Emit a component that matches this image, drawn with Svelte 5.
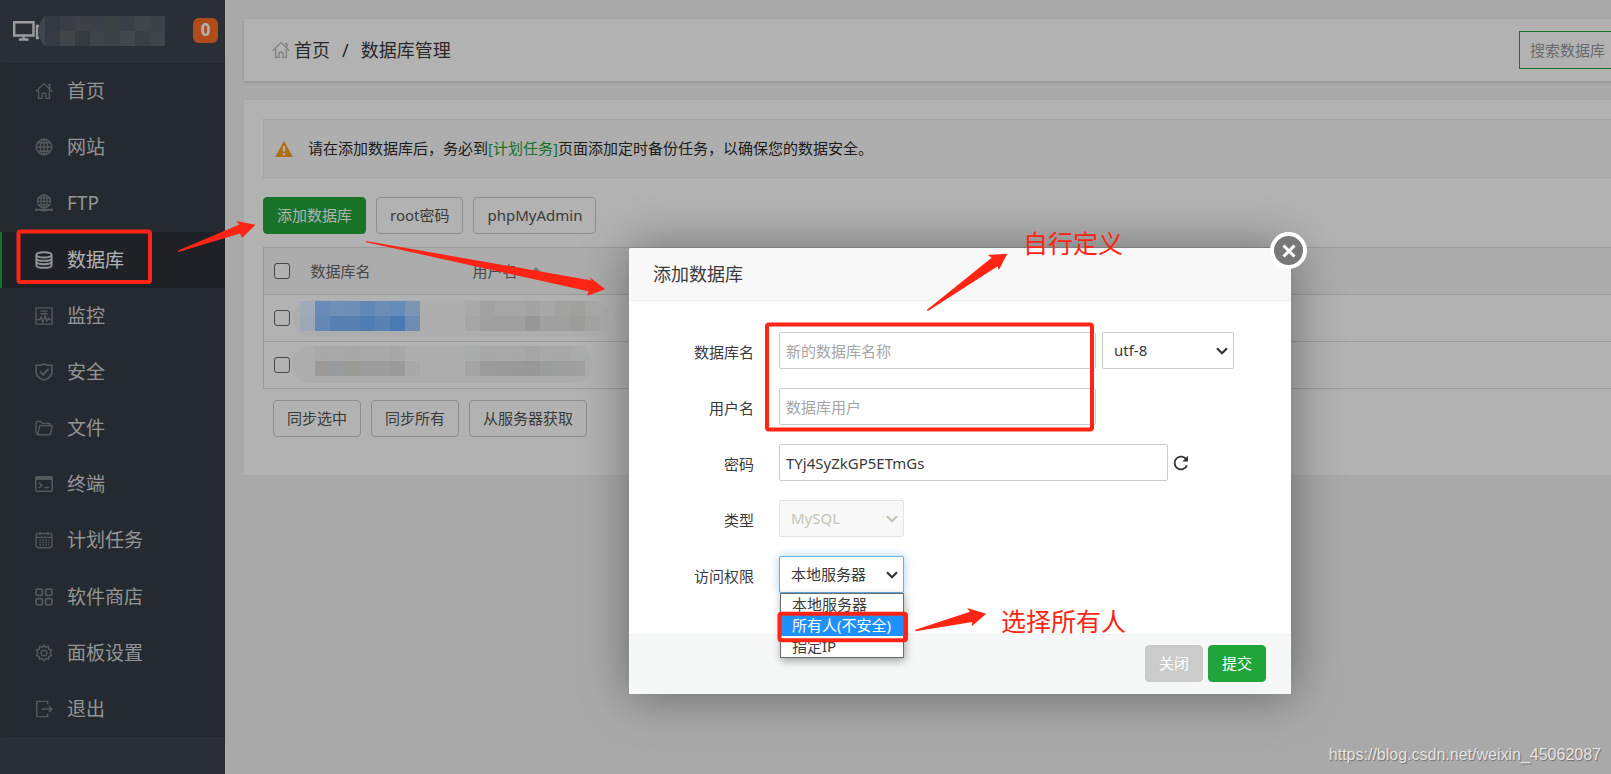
<script>
  const menu = [
    { label: '首页', icon: 'home' },
    { label: '网站', icon: 'globe' },
    { label: 'FTP', icon: 'ftp' },
    { label: '数据库', icon: 'database', active: true },
    { label: '监控', icon: 'monitor' },
    { label: '安全', icon: 'shield' },
    { label: '文件', icon: 'folder' },
    { label: '终端', icon: 'terminal' },
    { label: '计划任务', icon: 'calendar' },
    { label: '软件商店', icon: 'apps' },
    { label: '面板设置', icon: 'gear' },
    { label: '退出', icon: 'exit' }
  ];

  const access = ['本地服务器', '所有人(不安全)', '指定IP'];
  let picked = $state(1);

  // Each mosaic is rows of 15px cells.
  const mosaics = [
    {
      x: 45, y: 16,
      rows: [
        ['#353a42', '#393e45', '#3d4146', '#3d4147', '#3d4245', '#3a3f46', '#40454a', '#3c4246'],
        ['#363b43', '#414548', '#373b3e', '#3f4449', '#3d4246', '#43474b', '#3a3f44', '#40454a']
      ]
    },
    {
      x: 300, y: 301,
      rows: [
        ['#9fabb8', '#698ab8', '#7090b8', '#6d8eb6', '#6288b6', '#6b8db6', '#658bb8', '#7b95b4'],
        ['#9ca8b6', '#6388b5', '#567fb2', '#5680b1', '#4f7db3', '#5982b4', '#4a7ab4', '#6e8cb3']
      ]
    },
    {
      x: 465, y: 301,
      rows: [
        ['#a9a9a9', '#a1a1a1', '#a6a6a6', '#a6a6a6', '#a3a3a3', '#a8a8a8', '#a2a2a1', '#a0a09f', '#a6a6a6'],
        ['#a5a5a5', '#a0a0a0', '#9f9f9f', '#a0a0a0', '#979797', '#a0a0a0', '#9f9f9f', '#9c9c9a', '#a0a2a1']
      ]
    },
    {
      x: 315, y: 346,
      rows: [
        ['#a8a8a8', '#a9a9a9', '#a7a7a7', '#a9a9a9', '#a9a9a9', '#a7a7a7', '#adadad'],
        ['#9b9a98', '#9a9b9d', '#9a9a97', '#9d9d9d', '#9c9d9c', '#9b9a98', '#a8a8a8']
      ]
    },
    {
      x: 465, y: 346,
      rows: [
        ['#abacac', '#a7a8a7', '#a9a9a9', '#a8a8a8', '#a5a5a5', '#a9a9a9', '#a8a8a8', '#a9aaaa'],
        ['#a4a4a4', '#9b9b9b', '#9a9a9a', '#999999', '#989898', '#9c9e9d', '#9e9e9e', '#9f9f9f']
      ]
    }
  ];
</script>

{#snippet icon(name)}
  <svg class="ico" viewBox="0 0 20 20" aria-hidden="true">
    {#if name === 'home'}
      <path d="M1 10.500 10 1.800l9 8.700M14.200 3h2.300v4.500M4 9v9.200h3.800v-4.700q0-1 1-1h2.400q1 0 1 1v4.700H16V9" />
    {:else if name === 'globe'}
      <circle cx="10" cy="10" r="8.700" /><ellipse cx="10" cy="10" rx="4.200" ry="8.700" /><path d="M10 1.300v17.400M1.300 10h17.400M3 5.300h14M3 14.700h14" />
    {:else if name === 'ftp'}
      <circle cx="10" cy="8.200" r="7.200" /><ellipse cx="10" cy="8.200" rx="3.500" ry="7.200" /><path d="M10 1v15M2.800 8.200h14.400M4 4.500h12M4 12h12" /><path stroke-width="2" d="M0 17.500h20M7 18.500h6" />
    {:else if name === 'database'}
      <path stroke-width="2.200" d="M1.500 4.300C1.500 .4 18.500 .4 18.500 4.300S1.500 8.200 1.500 4.300v11.400c0 3.900 17 3.900 17 0V4.300M1.500 8c0 3.900 17 3.900 17 0M1.500 11.800c0 3.900 17 3.900 17 0" />
    {:else if name === 'monitor'}
      <path d="M1 1h18v18H1zM6 4.500h8M6 7.500h8M1 14h4l1.700-2.500L8.600 17l2.600-7 2 5.500 1.800-3 1 1.500h3" />
    {:else if name === 'shield'}
      <path stroke-width="1.800" d="M10 1c3 1.400 6 1.700 8.800 1.700v7.100c0 4.300-3.600 7.500-8.800 9.400-5.200-1.900-8.800-5.100-8.800-9.400V2.700C4 2.700 7 2.400 10 1z" /><path stroke-width="2" d="m5.500 9.500 3.500 3.500 6-6.500" />
    {:else if name === 'folder'}
      <path d="M3 17 1.200 15V4q0-1.200 1.200-1.200h4l2 2h7.200q1.200 0 1.200 1.200v1.200M3 17.500 5.200 8q.2-.8 1-.8h12.100q1 0 .8 1l-1.800 8.300q-.2 1-1.200 1H3z" />
    {:else if name === 'terminal'}
      <rect x=".8" y="2" width="18.400" height="16" rx="1" stroke-width="1.700" /><path stroke-width="3.600" d="M1 3.700h18" /><path stroke-width="1.700" d="m4.500 8.500 3.200 3-3.200 3M10.500 14h5" />
    {:else if name === 'calendar'}
      <rect x="1.200" y="2.800" width="17.600" height="15.800" rx="2" /><path d="M1.200 7h17.600M5.500.8v4M14.500.8v4" /><path stroke-dasharray="1.800 1.500" d="M4.800 10h11M4.800 12.800h11M4.800 15.600h11" />
    {:else if name === 'apps'}
      <g stroke-width="2"><rect x="1.200" y="1.200" width="7" height="7" rx="1.600" /><rect x="11.800" y="1.200" width="7" height="7" rx="1.600" /><rect x="1.200" y="11.800" width="7" height="7" rx="1.600" /><rect x="11.800" y="11.800" width="7" height="7" rx="1.600" /></g>
    {:else if name === 'gear'}
      <circle cx="10" cy="10" r="3.200" /><path stroke-width="1.600" d="m10 1.200 2 2.400 3-.9.400 3 2.900 1.200-1.400 2.900 1.400 2.900-2.900 1.300-.4 3-3-.8-2 2.600-2-2.600-3 .8-.4-3-2.900-1.300 1.400-2.900-1.400-2.900 2.900-1.200.4-3 3 .9z" />
    {:else if name === 'exit'}
      <path stroke-width="1.600" d="M14 5V1.500H2v17h12V15M7.500 10h11M15.500 6.800l3.300 3.200-3.300 3.200" />
    {/if}
  </svg>
{/snippet}

{#snippet chevron()}
  <svg class="chev" viewBox="0 0 12 8" aria-hidden="true"><path d="m1 1.300 5 5 5-5" /></svg>
{/snippet}

<div class="page">
  <aside>
    <header class="host">
      <svg class="screen" viewBox="0 0 26 20" aria-hidden="true">
        <path d="M1.200 1.200h19.300v13.300H1.200zM26 5h-2v12h2" /><path d="M6 18.500h9.500M10.700 15v3" />
      </svg>
      <span class="badge">0</span>
    </header>
    <nav>
      {#each menu as item}
        <a href="#{item.icon}" class:active={item.active}>
          {@render icon(item.icon)}
          <span>{item.label}</span>
        </a>
      {/each}
    </nav>
  </aside>

  <main>
    <div class="wide">
      <section class="crumbs">
        <div class="trail">
          {@render icon('home')}
          <a href="#home">首页</a><span class="sep">/</span><span>数据库管理</span>
        </div>
        <input type="search" placeholder="搜索数据库" aria-label="搜索数据库" />
      </section>

      <section class="content">
        <p class="notice">
          <svg viewBox="0 0 18 16" aria-hidden="true">
            <path fill="#f9a11b" d="M9 0l9 16H0z" /><path stroke="#fafafa" stroke-width="2.400" d="M9 5v5.500M9 12v2.200" />
          </svg>
          <span>请在添加数据库后，务必到<a href="#calendar">[计划任务]</a>页面添加定时备份任务，以确保您的数据安全。</span>
        </p>

        <div class="tools">
          <button class="btn green">添加数据库</button>
          <button class="btn">root密码</button>
          <button class="btn">phpMyAdmin</button>
        </div>

        <table>
          <thead>
            <tr>
              <th class="tick"><input type="checkbox" aria-label="全选" /></th>
              <th class="name">数据库名</th>
              <th>用户名<i class="sort"></i></th>
            </tr>
          </thead>
          <tbody>
            <tr><td class="tick"><input type="checkbox" aria-label="1" /></td><td></td><td></td></tr>
            <tr><td class="tick"><input type="checkbox" aria-label="2" /></td><td></td><td></td></tr>
          </tbody>
        </table>

        <div class="tools under">
          <button class="btn">同步选中</button>
          <button class="btn">同步所有</button>
          <button class="btn">从服务器获取</button>
        </div>
      </section>
    </div>
  </main>

  <div class="shade"></div>

  <form class="dialog" onsubmit={(e) => e.preventDefault()}>
    <h2>添加数据库</h2>
    <button type="button" class="close" aria-label="关闭窗口">
      <svg viewBox="0 0 14 14" aria-hidden="true"><path d="m1.500 1.500 11 11m0-11-11 11" /></svg>
    </button>

    <div class="fields">
      <div class="row">
        <label for="db-name">数据库名</label>
        <input id="db-name" class="mid" type="text" placeholder="新的数据库名称" />
        <span class="pick charset">
          <select aria-label="编码"><option>utf-8</option></select>
          {@render chevron()}
        </span>
      </div>
      <div class="row">
        <label for="db-user">用户名</label>
        <input id="db-user" class="mid" type="text" placeholder="数据库用户" />
      </div>
      <div class="row">
        <label for="db-pass">密码</label>
        <input id="db-pass" class="long" type="text" value="TYj4SyZkGP5ETmGs" />
        <button type="button" class="refresh" aria-label="随机密码">
          <svg viewBox="0 0 16 16" aria-hidden="true">
            <path fill="none" stroke="#333" stroke-width="1.800" d="M13.700 5A6.400 6.400 0 1 0 14 10.300" /><path fill="#333" d="M15 .8v5.700H9.300z" />
          </svg>
        </button>
      </div>
      <div class="row">
        <label for="db-type">类型</label>
        <span class="pick off">
          <select id="db-type" disabled><option>MySQL</option></select>
          {@render chevron()}
        </span>
      </div>
      <div class="row">
        <label for="db-access">访问权限</label>
        <span class="pick focus">
          <select id="db-access"><option>本地服务器</option></select>
          {@render chevron()}
          <ul role="listbox" aria-label="访问权限">
            {#each access as option, i}
              <li role="option" aria-selected={i === picked} class:on={i === picked}>{option}</li>
            {/each}
          </ul>
        </span>
      </div>
    </div>

    <footer>
      <button type="button" class="btn grey">关闭</button>
      <button type="submit" class="btn green">提交</button>
    </footer>
  </form>

  <svg class="marks" aria-hidden="true">
    <path fill="#40464a" d="M38 31q1-10 7-15v30q-5-4-7-15z" />
    <g fill="#000" fill-opacity=".025">
      <rect x="293" y="300" width="316" height="37" rx="18" />
      <rect x="292" y="346" width="300" height="37" rx="18" />
    </g>
    {#each mosaics as m}
      {#each m.rows as row, r}
        {#each row as fill, c}
          <rect x={m.x + c * 15} y={m.y + r * 15} width="15" height="15" {fill} shape-rendering="crispEdges" />
        {/each}
      {/each}
    {/each}
    <g fill="#ff2414">
      <path d="M178 250.500 239.500 224.500 236 221 255.500 224.700 242.300 237.700 240 233.500 178.500 252z" />
      <path d="M366 241 591.700 280.500 589 276.700 605.300 289.300 587.300 295.700 588.500 291.300 366.300 242.200z" />
      <path d="M926.700 310 991.700 257.700 987.700 255 1007.300 253.700 998.700 270.300 997.700 266.300 928 311z" />
      <path d="M915.300 629.800 970 611.700 967 608 986.300 613.700 971.700 626.300 972.300 622 915.500 631.200z" />
    </g>
    <g fill="none" stroke="#ff2414" stroke-width="4">
      <rect x="18.500" y="231.500" width="131.500" height="50.500" rx="2" />
      <rect x="767" y="324.500" width="325" height="105" rx="2" />
      <rect x="779.500" y="613.700" width="126.500" height="26.500" rx="2" />
    </g>
  </svg>
  <span class="note define">自行定义</span>
  <span class="note choose">选择所有人</span>
  <span class="source">https://blog.csdn.net/weixin_45062087</span>
</div>

<style>
  :global(body) {
    background: #f1f1f1;
  }
  .page {
    position: relative;
    display: flex;
    min-height: 100vh;
    overflow: hidden;
    color: #3a3a3a;
    font: 400 15px/21px 'Noto Sans', 'Noto Sans CJK SC', sans-serif;
  }
  .page *,
  .page {
    box-sizing: border-box;
  }
  a {
    color: inherit;
    text-decoration: none;
  }
  input,
  select,
  button {
    margin: 0;
    color: inherit;
    font: inherit;
  }

  /* sidebar */
  aside {
    display: flex;
    flex: none;
    flex-direction: column;
    width: 225px;
    padding-bottom: 37px;
    background: #3d444e;
  }
  .host {
    display: flex;
    align-items: center;
    justify-content: space-between;
    height: 63px;
    padding: 0 7px 2px 13px;
  }
  .screen {
    width: 26px;
    height: 20px;
    fill: none;
    stroke: #e0e2e3;
    stroke-width: 2.4;
  }
  .badge {
    width: 25px;
    height: 25px;
    border-radius: 6px;
    background: #fc6d26;
    color: #fff;
    font-size: 17px;
    font-weight: 700;
    line-height: 24px;
    text-align: center;
  }
  nav {
    display: flex;
    flex: 1;
    flex-direction: column;
  }
  nav a {
    display: flex;
    flex: 1;
    align-items: center;
    gap: 14px;
    padding-left: 33px;
    border-left: 2px solid #3a3d40;
    background: #353c45;
    color: #d4d4d4;
    font-size: 19px;
    line-height: 28px;
  }
  .ico {
    flex: none;
    width: 18px;
    height: 18px;
    fill: none;
    stroke: #7c7f82;
    stroke-width: 1.5;
  }
  nav a.active {
    border-left-color: #20a53a;
    background: #2c3138;
    color: #fff;
  }
  nav a.active .ico {
    stroke: #d0d2d4;
  }

  /* main area */
  main {
    flex: 1;
    min-width: 0;
    padding: 19px 0 0 19px;
    overflow: hidden;
    background: #f2f2f2;
  }
  .wide {
    width: calc(100% + 171px);
  }
  .crumbs {
    display: flex;
    align-items: center;
    justify-content: space-between;
    height: 62px;
    padding: 0 20px 0 28px;
    background: #fff;
    box-shadow: 0 1px 3px rgba(0, 0, 0, 0.15);
  }
  .trail {
    display: flex;
    align-items: center;
    gap: 4px;
    font-size: 18px;
    line-height: 26px;
  }
  .trail .ico {
    stroke: #bbb;
  }
  .sep {
    padding: 0 8px;
  }
  .crumbs input {
    width: 243px;
    height: 38px;
    padding: 0 10px;
    border: 1px solid #20a53a;
    border-radius: 0;
    background: transparent;
    appearance: none;
  }
  .crumbs input::placeholder {
    color: #999;
  }
  .content {
    margin-top: 19px;
    padding: 19px 19px 38px;
    background: #fff;
  }
  .notice {
    display: flex;
    align-items: center;
    gap: 15px;
    height: 59px;
    margin: 0;
    padding-left: 11px;
    border: 1px solid #ececec;
    background: #fafafa;
    color: #2a2a2a;
  }
  .notice svg {
    width: 18px;
    height: 16px;
  }
  .notice a {
    color: #20a53a;
  }
  .tools {
    display: flex;
    gap: 10px;
    margin-top: 19px;
  }
  .btn {
    height: 37px;
    padding: 0 13px;
    border: 1px solid #ccc;
    border-radius: 4px;
    background: #fff;
    color: #555;
    white-space: nowrap;
  }
  .btn.green {
    border-color: #20a53a;
    background: #20a53a;
    color: #fff;
  }
  .btn.grey {
    border-color: #cbcbcb;
    background: #cbcbcb;
    color: #fff;
  }
  table {
    width: 100%;
    margin-top: 13px;
    border: 1px solid #ddd;
    border-collapse: collapse;
    table-layout: fixed;
  }
  tr {
    height: 47px;
    border-top: 1px solid #ddd;
  }
  th,
  td {
    padding: 0;
    text-align: left;
    font-weight: 400;
    color: #666;
  }
  thead {
    background: #f6f6f6;
  }
  .tick {
    width: 47px;
    padding-left: 10px;
  }
  .name {
    width: 162px;
  }
  table input {
    display: block;
    width: 16px;
    height: 16px;
    border: 1px solid #666;
    border-radius: 3px;
    background: #fff;
    appearance: none;
  }
  .sort {
    display: inline-block;
    margin-left: 12px;
    border: 6px solid transparent;
    border-top: 0;
    border-bottom-color: #aaa;
    vertical-align: 4px;
  }
  .under {
    margin-top: 11px;
    padding-left: 10px;
  }

  .shade {
    position: absolute;
    inset: 0;
    background: rgba(0, 0, 0, 0.3);
  }

  /* dialog */
  .dialog {
    position: absolute;
    top: 248px;
    left: 629px;
    width: 662px;
    border-radius: 2px;
    background: #fff;
    box-shadow: 1px 1px 50px rgba(0, 0, 0, 0.4);
  }
  h2 {
    height: 53px;
    margin: 0;
    padding-left: 24px;
    border-bottom: 1px solid #eee;
    border-radius: 2px 2px 0 0;
    background: #f8f8f8;
    font-size: 18px;
    font-weight: 400;
    line-height: 53px;
  }
  .close {
    position: absolute;
    top: -16px;
    right: -16px;
    display: grid;
    place-items: center;
    width: 37px;
    height: 37px;
    padding: 0;
    border: 4px solid #fff;
    border-radius: 50%;
    background: #787878;
  }
  .close svg {
    width: 14px;
    height: 14px;
    stroke: #fff;
    stroke-width: 3;
  }
  .fields {
    display: flex;
    flex-direction: column;
    gap: 19px;
    padding: 31px 0 41px;
  }
  .row {
    display: flex;
    align-items: center;
    height: 37px;
  }
  label {
    width: 125px;
    margin-right: 25px;
    padding-top: 3px;
    text-align: right;
  }
  .row input {
    height: 37px;
    padding: 0 6px;
    border: 1px solid #ccc;
    border-radius: 2px;
    background: #fff;
  }
  .row input::placeholder {
    color: #a5a5a5;
  }
  .mid {
    width: 317px;
  }
  .long {
    width: 389px;
  }
  .refresh {
    display: flex;
    margin-left: 5px;
    padding: 0;
    border: 0;
    background: none;
  }
  .refresh svg {
    width: 16px;
    height: 16px;
  }
  .pick {
    position: relative;
    width: 125px;
    height: 37px;
  }
  .charset {
    width: 132px;
    margin-left: 6px;
  }
  select {
    width: 100%;
    height: 100%;
    padding: 0 11px;
    border: 1px solid #ccc;
    border-radius: 2px;
    background: #fff;
    appearance: none;
  }
  .chev {
    position: absolute;
    top: 15px;
    right: 6px;
    width: 12px;
    height: 8px;
    fill: none;
    stroke: #333;
    stroke-width: 2.2;
    pointer-events: none;
  }
  .off select {
    border-color: #e4e4e4;
    background: #f8f8f8;
    color: #c5c5ba;
    opacity: 1;
  }
  .off .chev {
    stroke: #c5c5ba;
  }
  .focus select {
    border-color: #66afe9;
    box-shadow: 0 0 10px rgba(102, 175, 233, 0.6);
  }
  ul {
    position: absolute;
    top: 37px;
    left: 1px;
    width: 124px;
    margin: 0;
    padding: 0;
    border: 1px solid #6b6b6b;
    background: #fff;
    box-shadow: 1px 3px 8px rgba(0, 0, 0, 0.35);
    list-style: none;
  }
  li {
    padding-left: 11px;
    line-height: 21px;
    white-space: nowrap;
  }
  .on {
    background: #1e90ff;
    color: #fff;
  }
  footer {
    display: flex;
    justify-content: flex-end;
    gap: 5px;
    padding: 10px 25px 12px;
    border-top: 1px solid #edf1f2;
    background: #f6f8f8;
  }

  /* marks drawn over the page */
  .marks {
    position: absolute;
    inset: 0;
    width: 100%;
    height: 100%;
    pointer-events: none;
  }
  .note {
    position: absolute;
    color: #ff2414;
    font-size: 25px;
    line-height: 36px;
  }
  .define {
    top: 225px;
    left: 1023px;
  }
  .choose {
    top: 603px;
    left: 1001px;
  }
  .source {
    position: absolute;
    right: 10px;
    bottom: 9px;
    color: #e4e4e4;
    font: 16px/20px 'Liberation Sans', Arial, sans-serif;
    text-shadow: 1px 1px 1px rgba(0, 0, 0, 0.35);
  }
</style>
